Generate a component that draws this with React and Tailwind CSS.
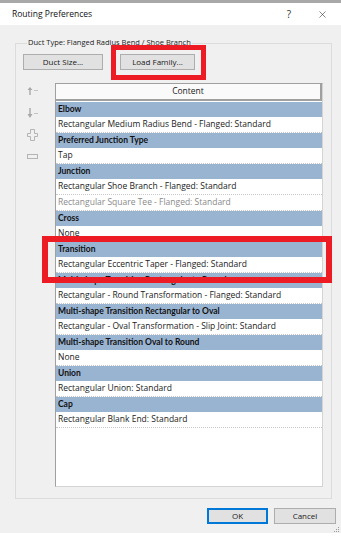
import { X } from 'lucide-react'

// Routing Preferences dialog (Revit-like) – duct routing content list
const sections = [
  { title: 'Elbow', rows: ['Rectangular Medium Radius Bend - Flanged: Standard'] },
  { title: 'Preferred Junction Type', rows: ['Tap'] },
  {
    title: 'Junction',
    rows: ['Rectangular Shoe Branch - Flanged: Standard', { text: 'Rectangular Square Tee - Flanged: Standard', muted: true }],
  },
  { title: 'Cross', rows: ['None'] },
  { title: 'Transition', rows: ['Rectangular Eccentric Taper - Flanged: Standard'], marked: true },
  { title: 'Multi-shape Transition Rectangular to Round', rows: ['Rectangular - Round Transformation - Flanged: Standard'] },
  { title: 'Multi-shape Transition Rectangular to Oval', rows: ['Rectangular - Oval Transformation - Slip Joint: Standard'] },
  { title: 'Multi-shape Transition Oval to Round', rows: ['None'] },
  { title: 'Union', rows: ['Rectangular Union: Standard'] },
  { title: 'Cap', rows: ['Rectangular Blank End: Standard'] },
]

function Button({ children, width, primary = false }) {
  return (
    <button
      className={`h-[16px] ${width} flex items-center justify-center bg-[#e1e1e1] border text-[8px] leading-none text-[#1a1a1a] ${
        primary ? 'border-[#0078d7] shadow-[inset_0_0_0_1px_#0078d7]' : 'border-[#adadad]'
      }`}
    >
      {children}
    </button>
  )
}

function Section({ section }) {
  return (
    <div className={section.marked ? 'relative z-10' : ''}>
      <div className="h-[15px] bg-[#99b4d1] pl-[2px] flex items-center text-[8.5px] font-bold font-['Lato',sans-serif] text-[#111] whitespace-nowrap">
        {section.title}
      </div>
      {section.rows.map((row, i) => {
        const text = typeof row === 'string' ? row : row.text
        const muted = typeof row === 'object' && row.muted
        return (
          <div
            key={i}
            className={`h-[16px] bg-white border-b border-dotted border-[#c8c8c8] pl-[2px] flex items-center text-[8.5px] whitespace-nowrap ${
              muted ? 'text-[#8a8a8a]' : 'text-[#222]'
            }`}
          >
            {text}
          </div>
        )
      })}
      {section.marked && (
        <span className="absolute left-[-14px] right-[-10px] top-[-6px] bottom-[-10px] border-[6px] border-[#ed1c24] pointer-events-none" />
      )}
    </div>
  )
}

export default function App() {
  return (
    <div className="w-[341px] h-[537px] bg-white overflow-hidden font-['Open_Sans',sans-serif]">
      <div className="h-[3px] bg-[#a8a8a8]" />

      {/* Title bar */}
      <div className="h-[22px] flex items-center pl-[12px] pr-[13px] bg-white">
        <span className="text-[8.5px] text-[#111] flex-1">Routing Preferences</span>
        <span className="text-[10px] text-[#333] mr-[26px]">?</span>
        <X className="w-[11px] h-[11px] text-[#222]" strokeWidth={1.2} />
      </div>

      {/* Body */}
      <div className="h-[508px] bg-[#f0f0f0] flex flex-col">
        <div className="mt-[18px] mx-[15px] w-[317px] border border-[#dcdcdc] px-[7px] pb-[11px]">
          <div className="-mt-[7px] ml-[4px] px-[1px] w-fit bg-[#f0f0f0] text-[7.5px] leading-[10px] text-[#222] whitespace-nowrap">
            Duct Type: Flanged Radius Bend / Shoe Branch
          </div>

          <div className="mt-[7px] flex gap-[17px] items-center">
            <Button width="w-[80px]">Duct Size...</Button>
            <div className="relative">
              <Button width="w-[75px]">Load Family...</Button>
              <span className="absolute left-[-9px] right-[-11px] top-[-9px] bottom-[-10px] border-[5px] border-[#ed1c24]" />
            </div>
          </div>

          <div className="flex mt-[13px]">
            {/* toolbar */}
            <div className="w-[32px] pl-[4px] flex flex-col">
              <svg width="12" height="9" viewBox="0 0 12 9" className="mt-[3px]">
                <path d="M3 1 L5.5 4 H3.7 V9 H2.3 V4 H0.5 Z" fill="#a8a8a8" />
                <path d="M7 4.5 H11" stroke="#c4c4c4" strokeWidth="1" />
              </svg>
              <svg width="12" height="10" viewBox="0 0 12 10" className="mt-[13px]">
                <path d="M3 10 L5.5 6 H3.7 V0 H2.3 V6 H0.5 Z" fill="#a8a8a8" />
                <path d="M7 5.5 H11" stroke="#c4c4c4" strokeWidth="1" />
              </svg>
              <svg width="11" height="12" viewBox="0 0 11 12" className="mt-[11px]">
                <path
                  d="M3.5 0.5 H7.5 V4.5 H10.5 V7.5 H7.5 V11.5 H3.5 V7.5 H0.5 V4.5 H3.5 Z"
                  fill="none"
                  stroke="#b4b4b4"
                  strokeWidth="1"
                />
              </svg>
              <svg width="11" height="5" viewBox="0 0 11 5" className="mt-[13px]">
                <rect x="0.5" y="0.5" width="10" height="4" fill="none" stroke="#b4b4b4" strokeWidth="1" />
              </svg>
            </div>

            {/* content table */}
            <div className="w-[268px] h-[404px] bg-white border border-[#a0a0a0] border-r-[#d4d4d4] border-b-[#d4d4d4] flex flex-col">
              <div className="h-[17px] bg-[#fafafa] border-b-2 border-r-2 border-[#a0a0a0] flex items-center justify-center text-[8.5px] text-[#222]">
                Content
              </div>
              <div className="mt-[1px] flex flex-col">
                {sections.map((s) => (
                  <Section key={s.title} section={s} />
                ))}
              </div>
            </div>
          </div>
        </div>

        <div className="mt-[9px] flex justify-end gap-[6px] pr-[5px]">
          <Button width="w-[61px]" primary>
            OK
          </Button>
          <Button width="w-[62px]">Cancel</Button>
        </div>

        <div className="mt-auto self-end mr-[2px] mb-[1px] grid grid-cols-3 gap-[1px]">
          {[0, 0, 1, 0, 1, 1, 1, 1, 1].map((on, i) => (
            <span key={i} className={`w-[1px] h-[1px] ${on ? 'bg-[#9a9a9a]' : 'bg-transparent'}`} />
          ))}
        </div>
      </div>
    </div>
  )
}
